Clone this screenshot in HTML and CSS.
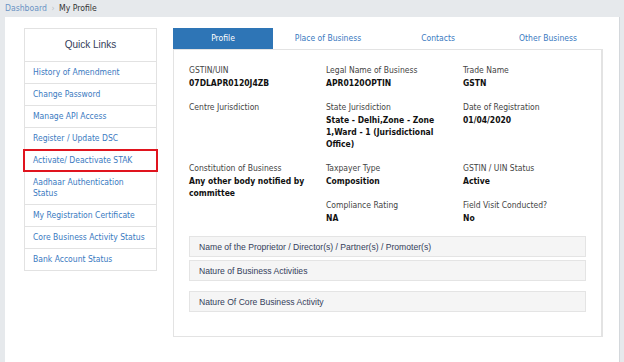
FILE: index.html
```html
<!DOCTYPE html>
<html lang="en">
<head>
    <meta charset="UTF-8">
    <title>My Profile</title>
    <link rel="stylesheet" href="styles.css">
</head>
<body>
    <div class="breadcrumb">
        <a href="#">Dashboard</a>
        <span class="sep">&rsaquo;</span>
        <span>My Profile</span>
    </div>

    <div class="page">
        <div class="quick-links">
            <div class="ql-head">Quick Links</div>
            <a href="#" class="ql-item">History of Amendment</a>
            <a href="#" class="ql-item">Change Password</a>
            <a href="#" class="ql-item">Manage API Access</a>
            <a href="#" class="ql-item">Register / Update DSC</a>
            <a href="#" class="ql-item highlight">Activate/ Deactivate STAK</a>
            <a href="#" class="ql-item">Aadhaar Authentication Status</a>
            <a href="#" class="ql-item">My Registration Certificate</a>
            <a href="#" class="ql-item">Core Business Activity Status</a>
            <a href="#" class="ql-item">Bank Account Status</a>
        </div>

        <div class="main">
            <div class="tabs">
                <a href="#" class="tab active">Profile</a>
                <a href="#" class="tab">Place of Business</a>
                <a href="#" class="tab">Contacts</a>
                <a href="#" class="tab">Other Business</a>
            </div>

            <div class="panel">
                <div class="fields">
                    <div class="field">
                        <div class="label">GSTIN/UIN</div>
                        <div class="value">07DLAPR0120J4ZB</div>
                    </div>
                    <div class="field">
                        <div class="label">Legal Name of Business</div>
                        <div class="value">APR0120OPTIN</div>
                    </div>
                    <div class="field">
                        <div class="label">Trade Name</div>
                        <div class="value">GSTN</div>
                    </div>
                    <div class="field">
                        <div class="label">Centre Jurisdiction</div>
                        <div class="value"></div>
                    </div>
                    <div class="field">
                        <div class="label">State Jurisdiction</div>
                        <div class="value">State - Delhi,Zone - Zone 1,Ward - 1 (Jurisdictional Office)</div>
                    </div>
                    <div class="field">
                        <div class="label">Date of Registration</div>
                        <div class="value">01/04/2020</div>
                    </div>
                    <div class="field tall">
                        <div class="label">Constitution of Business</div>
                        <div class="value">Any other body notified by committee</div>
                    </div>
                    <div class="field">
                        <div class="label">Taxpayer Type</div>
                        <div class="value">Composition</div>
                    </div>
                    <div class="field">
                        <div class="label">GSTIN / UIN Status</div>
                        <div class="value">Active</div>
                    </div>
                    <div class="field">
                        <div class="label">Compliance Rating</div>
                        <div class="value">NA</div>
                    </div>
                    <div class="field">
                        <div class="label">Field Visit Conducted?</div>
                        <div class="value">No</div>
                    </div>
                </div>

                <div class="bar">Name of the Proprietor / Director(s) / Partner(s) / Promoter(s)</div>
                <div class="bar">Nature of Business Activities</div>
                <div class="bar gap">Nature Of Core Business Activity</div>
            </div>
        </div>
    </div>
</body>
</html>
```

FILE: styles.css
```css
body {
    margin: 0;
    background-color: #e6e9ec;
    font-family: 'DejaVu Sans Condensed', 'DejaVu Sans', Tahoma, sans-serif;
    font-size: 8.5px;
    color: #333;
    height: 362px;
    overflow: hidden;
}

a {
    text-decoration: none;
    color: #3a7abf;
}

.breadcrumb {
    height: 17px;
    line-height: 16px;
    padding-left: 5px;
    font-size: 8.6px;
}

.breadcrumb a {
    color: #6a93c4;
}

.breadcrumb .sep {
    color: #b8bfc6;
    margin: 0 2px;
}

.page {
    background: white;
    margin-left: 5px;
    width: 615px;
    height: 345px;
    display: flex;
    align-items: flex-start;
    box-sizing: border-box;
    padding: 11px 0 0 19px;
    border-right: 1px solid #d4d8dc;
}

/* Quick links */
.quick-links {
    width: 131px;
    border: 1px solid #e2e2e2;
    border-bottom: 0;
    display: flex;
    flex-direction: column;
}

.ql-head {
    height: 32px;
    line-height: 32px;
    text-align: center;
    font-family: 'Liberation Sans', Arial, sans-serif;
    font-size: 10px;
    color: #34405a;
    border-bottom: 1px solid #e2e2e2;
}

.ql-item {
    display: block;
    padding: 5px 8px 5px 8px;
    line-height: 11px;
    color: #3a7abf;
    border-bottom: 1px solid #e2e2e2;
}

.ql-item.highlight {
    border: 2px solid #e0141e;
    margin: -1px -2px 0 -2px;
    padding: 4px 8px 4px 8px;
}

/* Main area */
.main {
    margin-left: 16px;
    width: 430px;
}

.tabs {
    display: flex;
    height: 21px;
}

.tab {
    width: 110px;
    line-height: 21px;
    text-align: center;
    color: #3a7abf;
}

.tab.active {
    width: 100px;
    background-color: #2e75b6;
    color: white;
}

.panel {
    border: 1px solid #e3e3e3;
    border-right-width: 2px;
    height: 288px;
    box-sizing: border-box;
    padding: 14px 15px 0 15px;
}

.fields {
    display: grid;
    grid-template-columns: 137px 137px 1fr;
}

.field {
    padding-bottom: 12px;
    line-height: 12px;
}

.field.tall {
    grid-row: span 2;
}

.label {
    margin-bottom: 1px;
    color: #444;
}

.value {
    font-weight: bold;
    color: #111;
    padding-right: 8px;
}

.bar {
    background-color: #f5f5f5;
    border: 1px solid #e4e4e4;
    height: 21px;
    line-height: 20px;
    box-sizing: border-box;
    padding-left: 9px;
    margin-bottom: 3px;
    font-family: 'Liberation Sans', Arial, sans-serif;
    font-size: 8.6px;
    color: #34405a;
}

.bar.gap {
    margin-top: 10px;
}
```
